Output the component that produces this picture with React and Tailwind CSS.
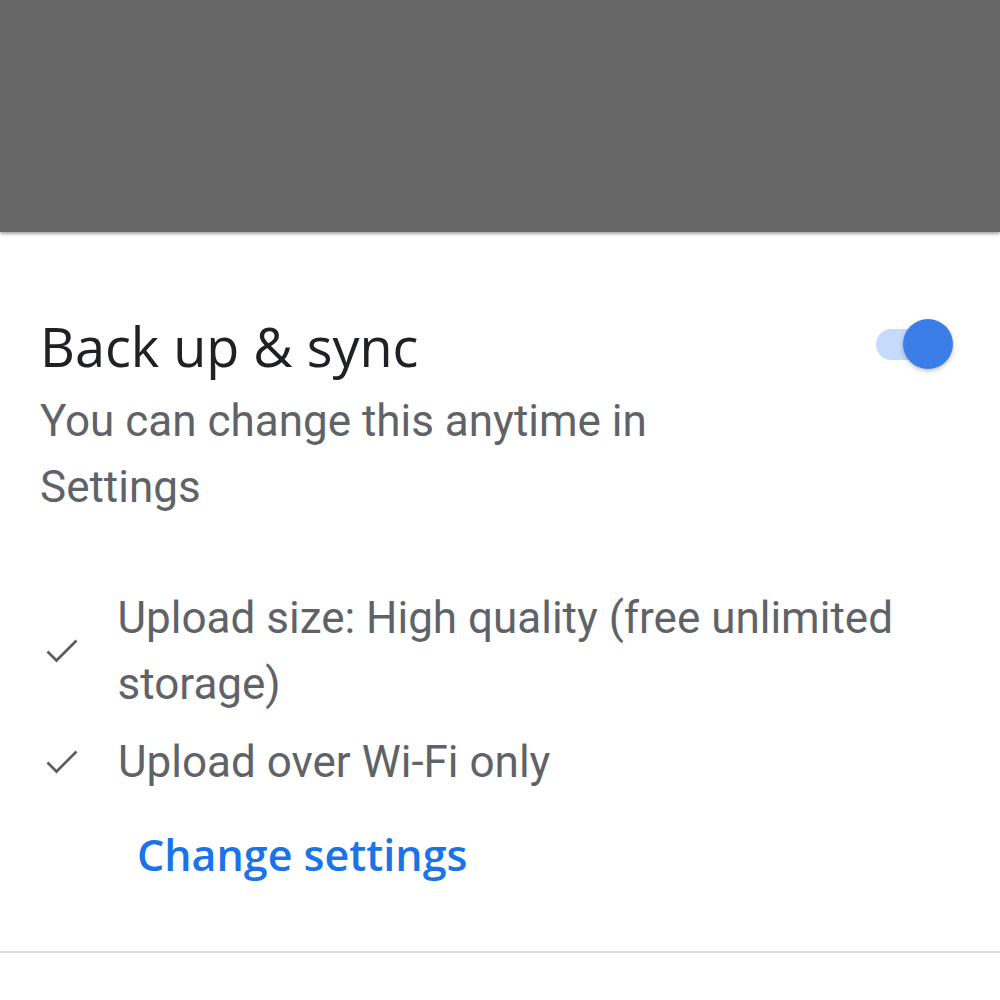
import React from "react";

function Check() {
  return (
    <svg width="32" height="26" viewBox="0 0 32 26" className="shrink-0 ml-[6px]">
      <path d="M1.5 13.5 L10.5 22.5 L30.5 2.5" fill="none" stroke="#5a5e63" strokeWidth="2.7" />
    </svg>
  );
}

export default function App() {
  return (
    <div className="w-[1000px] h-[1000px] bg-white overflow-hidden relative" style={{ fontFamily: "Roboto, sans-serif" }}>
      <div className="h-[232px] bg-[#666666] shadow-[0_2px_3px_rgba(0,0,0,0.35)] relative z-10" />
      <div className="pl-[40px] pr-[47px] pt-[84px]">
        <div className="flex items-center justify-between">
          <h1 className="text-[54px] leading-[60px] text-[#202124]" style={{ fontFamily: "'Open Sans', sans-serif" }}>Back up &amp; sync</h1>
          <div className="relative w-[77px] h-[50px] flex items-center -mt-[4px]">
            <div className="w-[60px] h-[31px] rounded-full bg-[#c6dafc]" />
            <div className="absolute right-0 top-0 w-[50px] h-[50px] rounded-full bg-[#3b7ee8] shadow-[0_2px_4px_rgba(0,0,0,0.25)]" />
          </div>
        </div>
        <p className="text-[44px] leading-[66px] text-[#5f6368] w-[700px] mt-[12px]">You can change this anytime in Settings</p>
        <div className="mt-[65px] flex flex-col">
          <div className="flex items-center">
            <div className="w-[78px] flex"><Check /></div>
            <p className="text-[44px] leading-[66px] text-[#5f6368] w-[840px]">Upload size: High quality (free unlimited storage)</p>
          </div>
          <div className="flex items-center mt-[12px]">
            <div className="w-[78px] flex"><Check /></div>
            <p className="text-[44px] leading-[66px] text-[#5f6368]">Upload over Wi-Fi only</p>
          </div>
          <div className="pl-[97px] mt-[29px]">
            <span className="text-[43px] leading-[62px] font-semibold text-[#1a73e8]" style={{ fontFamily: "'Open Sans', sans-serif" }}>Change settings</span>
          </div>
        </div>
      </div>
      <div className="absolute left-0 right-0 top-[951px] h-[2px] bg-[#dadce0]" />
    </div>
  );
}
